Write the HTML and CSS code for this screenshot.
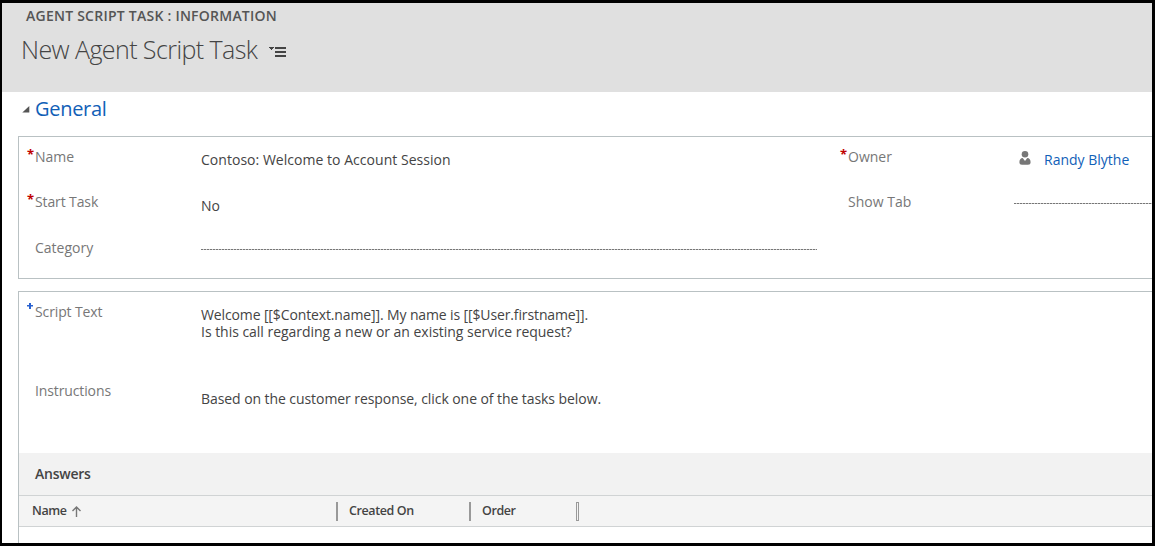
FILE: index.html
```html
<!DOCTYPE html>
<html lang="en">
<head>
<meta charset="utf-8">
<title>New Agent Script Task</title>
<link rel="stylesheet" href="styles.css">
</head>
<body>
<div class="window">
  <header class="header">
    <div class="crumb">AGENT SCRIPT TASK : INFORMATION</div>
    <div class="title-row">
      <h1 class="title">New Agent Script Task</h1>
      <svg class="menu-icon" width="18" height="12" viewBox="0 0 18 12" shape-rendering="crispEdges" fill="#444"><path d="M0 1h5v1H0zM1 2h3v1H1zM2 3h1v1H2zM6 1h11v2H6zM6 5h11v2H6zM6 9h11v2H6z"/></svg>
    </div>
  </header>
  <main class="content">
    <div class="tab-head">
      <svg width="8" height="7" viewBox="0 0 8 7" fill="#555"><path d="M7.300 0v6.600H.3z"/></svg>
      <h2 class="tab-title">General</h2>
    </div>
    <section class="box details">
      <div class="mark">*</div><div class="label">Name</div>
      <div class="value session">Contoso: Welcome to Account Session</div>
      <div class="mark">*</div><div class="label">Owner</div>
      <div class="value owner">
        <svg width="12" height="14" viewBox="0 0 12 14" fill="#777"><circle cx="6" cy="3.300" r="3.300"/><path d="M.4 11.200C.4 8.600 1.600 7.100 3.700 7L6 10l2.300-3c2.100.1 3.300 1.600 3.300 4.200 0 1.700-1 2.500-2.600 2.500H3C1.400 13.700.4 12.900.4 11.200z"/></svg>
        <a class="link">Randy Blythe</a>
      </div>
      <div class="mark">*</div><div class="label tight">Start Task</div>
      <div class="value start">No</div>
      <div class="mark"></div><div class="label">Show Tab</div>
      <div class="empty"></div>
      <div class="mark"></div><div class="label">Category</div>
      <div class="empty"></div>
    </section>
    <section class="box script">
      <div class="fields">
        <svg class="plus" width="6" height="6" viewBox="0 0 6 6" fill="#2a62d0"><path d="M2 0h2v2h2v1.500H4V6H2V3.500H0V2h2z"/></svg>
        <div class="label tight">Script Text</div>
        <div class="value text"><span class="greeting">Welcome [[$Context.name]]. My name is [[$User.firstname]].</span><br><span class="question">Is this call regarding a new or an existing service request?</span></div>
        <div class="mark"></div><div class="label tight">Instructions</div>
        <div class="value instructions">Based on the customer response, click one of the tasks below.</div>
      </div>
      <div class="answers">Answers</div>
      <div class="columns">
        <div class="col first"><span>Name</span>
          <svg width="9" height="11" viewBox="0 0 9 11" fill="none" stroke="#777" stroke-width="1.400"><path d="M4.500 11V1M.5 5l4-4 4 4"/></svg>
        </div>
        <div class="col created"><span>Created On</span></div>
        <div class="col order"><span>Order</span></div>
        <div class="grip"></div>
      </div>
    </section>
  </main>
</div>
</body>
</html>
```
FILE: styles.css
```css
* { box-sizing: border-box; }
body { margin: 0; font-family: "Open Sans", "Noto Sans", sans-serif; font-size: 14px; color: #444; }
.window { width: 1155px; height: 546px; border: solid #000; border-width: 3px 3px 3px 2px; background: #fff; overflow: hidden; display: flex; flex-direction: column; }
.header { height: 89px; background: #e0e0e0; flex: none; }
.crumb { padding: 3px 0 0 24px; font-size: 14px; line-height: 20px; font-weight: 600; letter-spacing: 0.24px; color: #555; }
.title-row { display: flex; align-items: center; padding-left: 19px; height: 48px; }
.title { margin: 0; font-size: 25px; font-weight: 300; letter-spacing: -0.58px; line-height: 46px; height: 48px; width: 248px; white-space: nowrap; color: #444; }
.menu-icon { margin-top: 3px; }
.content { flex: 1; padding-left: 16px; min-height: 0; }
.tab-head { display: flex; align-items: center; gap: 5px; height: 44px; padding: 0 0 10px 4px; }
.tab-title { margin: 0; font-size: 20px; font-weight: 400; line-height: 34px; letter-spacing: -0.3px; color: #1160b7; }
.box { border: 1px solid #b9c1c3; border-right: 0; }
.details { display: grid; grid-template-columns: 8px 166px 639px 8px 166px 1fr; grid-template-rows: 45px 46px 50px; height: 143px; padding-left: 8px; overflow: hidden; }
.mark { color: #c00000; font-size: 13px; font-weight: 700; line-height: 20px; padding-top: 7px; }
.label { color: #777; line-height: 20px; padding-top: 10px; white-space: nowrap; }
.tight { letter-spacing: -0.12px; }
.value { line-height: 20px; padding-top: 13px; white-space: nowrap; }
.session { letter-spacing: 0.03px; }
.start { padding-top: 14px; }
.owner { display: flex; gap: 13px; padding-left: 5px; align-items: flex-start; }
.owner svg { margin-top: 1px; flex: none; }
.link { color: #1160b7; }
.empty { height: 22px; width: 616px; background: repeating-linear-gradient(90deg, #777 0 2px, #ccc 2px 3px) bottom / 100% 1px no-repeat; }
.script { margin-top: 12px; height: 270px; }
.fields { display: grid; grid-template-columns: 8px 166px 1fr; grid-template-rows: 79px 82px; padding-left: 8px; }
.plus { margin-top: 11px; }
.text { line-height: 17px; padding-top: 14px; }
.greeting { letter-spacing: -0.125px; }
.question { letter-spacing: -0.03px; }
.instructions { padding-top: 18px; letter-spacing: -0.07px; }
.answers { height: 43px; line-height: 42px; padding-left: 16px; background: #f2f2f2; border-bottom: 1px solid #d0d3d4; font-weight: 600; letter-spacing: -0.25px; }
.columns { display: flex; align-items: center; height: 31px; background: #f4f4f4; border-bottom: 1px solid #d0d3d4; font-size: 12.5px; font-weight: 600; letter-spacing: -0.4px; }
.col { display: flex; align-items: center; height: 19px; line-height: 17px; border-right: 2px solid #999; }
.col span { height: 19px; }
.first { width: 319px; padding-left: 13px; gap: 5px; }
.created { width: 133px; padding-left: 11px; }
.order { width: 105px; padding-left: 11px; border: 0; }
.grip { width: 3px; height: 19px; border: 1px solid #999; }
```
